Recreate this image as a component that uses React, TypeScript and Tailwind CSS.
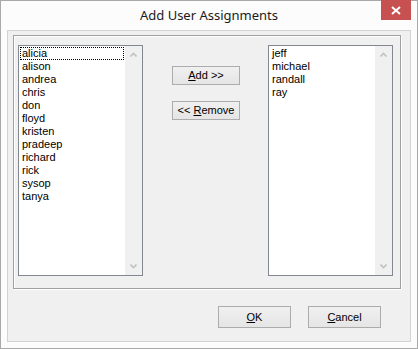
import React from 'react';

const leftUsers = ['alicia', 'alison', 'andrea', 'chris', 'don', 'floyd', 'kristen', 'pradeep', 'richard', 'rick', 'sysop', 'tanya'];
const rightUsers = ['jeff', 'michael', 'randall', 'ray'];

const Chevron = ({ down }: { down?: boolean }) => (
  <svg width="7" height="5" viewBox="0 0 7 5" className={down ? 'rotate-180' : ''}>
    <path d="M0.5 4.5 L3.5 1.5 L6.5 4.5" fill="none" stroke="#c2c2c2" strokeWidth="1.6" />
  </svg>
);

const ListBox = ({ items, focusFirst }: { items: string[]; focusFirst?: boolean }) => (
  <div className="w-[125px] h-[231px] border border-[#828790] bg-white flex">
    {/* Items */}
    <div className="flex-1 pt-[1px] flex flex-col">
      {items.map((name, i) => (
        <div
          key={name}
          className={
            i === 0 && focusFirst
              ? 'h-[13px] mx-[1px] pl-[1px] border border-dotted border-black flex items-center leading-none'
              : 'h-[13px] mx-[1px] pl-[2px] flex items-center leading-none'
          }
        >
          {name}
        </div>
      ))}
    </div>
    {/* Disabled scrollbar */}
    <div className="w-[17px] bg-[#f0f0f0] flex flex-col justify-between">
      <div className="h-[17px] flex items-center justify-center">
        <Chevron />
      </div>
      <div className="h-[17px] flex items-center justify-center">
        <Chevron down />
      </div>
    </div>
  </div>
);

const Button = ({ children, w, h }: { children: React.ReactNode; w: string; h: string }) => (
  <button className={`${w} ${h} border border-[#acacac] bg-gradient-to-b from-[#f0f0f0] to-[#e5e5e5] flex items-center justify-center leading-none text-black`}>
    {children}
  </button>
);

export default function App() {
  return (
    <div className="w-[418px] h-[349px] border border-[#a9a9a9] bg-[#fcfcfc] flex flex-col relative text-[11px] font-['Liberation_Sans',Arial,sans-serif] text-black">
      {/* Title bar */}
      <div className="h-[29px] flex items-center justify-center">
        <span className="font-['Noto_Sans',sans-serif] text-[13px] text-[#1a1a1a] pt-[1px]">Add User Assignments</span>
      </div>
      <div className="absolute top-[-1px] right-[6px] w-[30px] h-[20px] bg-[#c75050] flex items-center justify-center">
        <svg width="10" height="9" viewBox="0 0 10 9">
          <path d="M1 1 L9 8 M9 1 L1 8" stroke="#fff" strokeWidth="2" />
        </svg>
      </div>

      {/* Client area */}
      <div className="mx-[6px] h-[312px] border border-[#d3d3d3] bg-[#f0f0f0] flex flex-col">
        {/* Group box */}
        <div className="ml-[5px] mt-[4px] w-[388px] h-[254px] border border-[#a0a0a0] shadow-[1px_1px_0_#fff,inset_1px_1px_0_#fff] flex pl-[4px] pt-[9px]">
          <ListBox items={leftUsers} focusFirst />
          <div className="w-[125px] flex flex-col pl-[29px] pt-[21px] gap-[16px]">
            <Button w="w-[68px]" h="h-[19px]">
              <span><u>A</u>dd &gt;&gt;</span>
            </Button>
            <Button w="w-[68px]" h="h-[19px]">
              <span>&lt;&lt; <u>R</u>emove</span>
            </Button>
          </div>
          <ListBox items={rightUsers} />
        </div>

        {/* Dialog buttons */}
        <div className="mt-[17px] flex justify-end gap-[17px] pr-[29px]">
          <Button w="w-[73px]" h="h-[22px]">
            <span><u>O</u>K</span>
          </Button>
          <Button w="w-[73px]" h="h-[22px]">
            <span><u>C</u>ancel</span>
          </Button>
        </div>
      </div>
    </div>
  );
}
